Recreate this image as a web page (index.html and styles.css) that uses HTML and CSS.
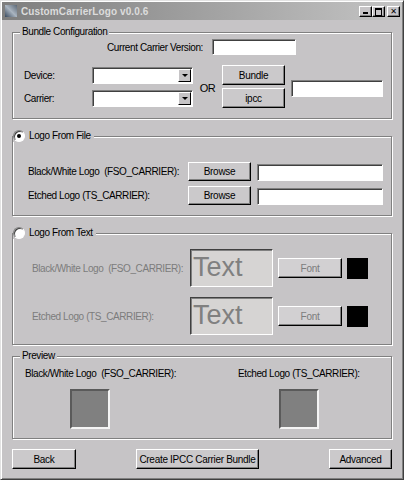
FILE: index.html
```html
<!DOCTYPE html>
<html lang="en">
<head>
    <meta charset="UTF-8">
    <title>CustomCarrierLogo v0.0.6</title>
    <link rel="stylesheet" href="styles.css">
</head>
<body>
<div class="window">
    <div class="titlebar">
        <svg class="app-icon" width="12" height="12" viewBox="0 0 12 12">
            <defs>
                <linearGradient id="ig" x1="0" y1="1" x2="1" y2="0">
                    <stop offset="0" stop-color="#3a4a5e"/>
                    <stop offset="0.5" stop-color="#a9b4c0"/>
                    <stop offset="1" stop-color="#5c6876"/>
                </linearGradient>
            </defs>
            <rect width="12" height="12" fill="url(#ig)"/>
        </svg>
        <span class="title">CustomCarrierLogo v0.0.6</span>
        <div class="caption-buttons">
            <span class="cap-btn cap-min"></span>
            <span class="cap-btn cap-max"></span>
            <span class="cap-btn cap-close">&#x2715;</span>
        </div>
    </div>

    <div class="content">
        <fieldset class="group group-bundle">
            <legend>Bundle Configuration</legend>
            <div class="version-row">
                <span class="version-label">Current Carrier Version:</span>
                <span class="field version-field"></span>
            </div>
            <div class="bundle-grid">
                <span class="lbl lbl-device">Device:</span>
                <span class="combo combo-device"><span class="combo-arrow"></span></span>
                <span class="lbl lbl-carrier">Carrier:</span>
                <span class="combo combo-carrier"><span class="combo-arrow"></span></span>
                <span class="or">OR</span>
                <button class="btn btn-bundle">Bundle</button>
                <button class="btn btn-ipcc">ipcc</button>
                <span class="field bundle-field"></span>
            </div>
        </fieldset>

        <fieldset class="group group-file">
            <legend class="radio-legend"><span class="radio checked"></span>Logo From File</legend>
            <div class="file-row">
                <span class="row-label">Black/White Logo&nbsp; (FSO_CARRIER):</span>
                <button class="btn btn-browse">Browse</button>
                <span class="field file-field"></span>
            </div>
            <div class="file-row">
                <span class="row-label">Etched Logo (TS_CARRIER):</span>
                <button class="btn btn-browse">Browse</button>
                <span class="field file-field"></span>
            </div>
        </fieldset>

        <fieldset class="group group-text">
            <legend class="radio-legend"><span class="radio"></span>Logo From Text</legend>
            <div class="text-row">
                <span class="row-label disabled">Black/White Logo&nbsp; (FSO_CARRIER):</span>
                <span class="text-box">Text</span>
                <button class="btn btn-font" disabled>Font</button>
                <span class="swatch"></span>
            </div>
            <div class="text-row">
                <span class="row-label disabled">Etched Logo (TS_CARRIER):</span>
                <span class="text-box">Text</span>
                <button class="btn btn-font" disabled>Font</button>
                <span class="swatch"></span>
            </div>
        </fieldset>

        <fieldset class="group group-preview">
            <legend>Preview</legend>
            <div class="preview-grid">
                <div class="preview-col">
                    <span>Black/White Logo&nbsp; (FSO_CARRIER):</span>
                    <span class="preview-box preview-bw"></span>
                </div>
                <div class="preview-col">
                    <span>Etched Logo (TS_CARRIER):</span>
                    <span class="preview-box preview-etched"></span>
                </div>
            </div>
        </fieldset>

        <div class="actions">
            <button class="btn btn-back">Back</button>
            <button class="btn btn-create">Create IPCC Carrier Bundle</button>
            <button class="btn btn-advanced">Advanced</button>
        </div>
    </div>
</div>
</body>
</html>
```

FILE: styles.css
```css
html, body {
    margin: 0;
    padding: 0;
}
body {
    background: #c6c4c6;
    font-family: 'Liberation Sans', Arial, sans-serif;
    font-size: 10px;
    letter-spacing: -0.4px;
    white-space: nowrap;
    color: #000;
}
.window {
    width: 404px;
    height: 480px;
    box-sizing: border-box;
    border: 1px solid;
    border-color: #e2e2e2 #404040 #404040 #e2e2e2;
    box-shadow: inset 1px 1px 0 #fff, inset -1px -1px 0 #808080;
    background: #c6c4c6;
}

/* title bar (inactive window) */
.titlebar {
    height: 18px;
    margin: 1px 1px 0;
    display: flex;
    align-items: center;
    background: linear-gradient(90deg, #7e7e7e 0%, #a4a4a4 55%, #c4c4c4 100%);
}
.app-icon {
    margin-left: 3px;
}
.title {
    margin-left: 4px;
    font-weight: bold;
    font-size: 10px;
    color: #dcdcdc;
    letter-spacing: 0.1px;
}
.caption-buttons {
    margin-left: auto;
    margin-right: 2px;
    display: flex;
}
.cap-btn {
    width: 13px;
    height: 11px;
    box-sizing: border-box;
    background: #c6c4c6;
    border: 1px solid;
    border-color: #fff #000 #000 #fff;
    box-shadow: inset -1px -1px 0 #808080;
    position: relative;
    font-family: 'DejaVu Sans', sans-serif;
    font-size: 8px;
    font-weight: bold;
    letter-spacing: 0;
    line-height: 9px;
    text-align: center;
}
.cap-close {
    margin-left: 2px;
}
.cap-min::after {
    content: '';
    position: absolute;
    left: 3px;
    bottom: 2px;
    width: 5px;
    height: 2px;
    background: #000;
}
.cap-max::after {
    content: '';
    position: absolute;
    left: 2px;
    top: 1px;
    width: 5px;
    height: 5px;
    border: 1px solid #000;
    border-top-width: 2px;
}

.content {
    padding: 6px 11px 0 11px;
}

/* etched group boxes */
.group {
    margin: 0;
    padding: 0;
    min-width: 0;
    border: 1px solid #808080;
    box-shadow: inset 1px 1px 0 #fff, 1px 1px 0 #fff;
    box-sizing: border-box;
}
.group legend {
    margin-left: 7px;
    padding: 0 2px;
    line-height: 12px;
    height: 12px;
    background: #c6c4c6;
}
.group .radio-legend {
    margin-left: 0;
    padding: 0 3px 0 0;
    display: flex;
    align-items: center;
}
.radio {
    width: 12px;
    height: 12px;
    box-sizing: border-box;
    border-radius: 50%;
    background: #fff;
    border: 1px solid;
    border-color: #808080 #fff #fff #808080;
    box-shadow: inset 1px 1px 0 #404040;
    margin-right: 4px;
    display: flex;
    align-items: center;
    justify-content: center;
}
.radio.checked::after {
    content: '';
    width: 4px;
    height: 4px;
    border-radius: 50%;
    background: #000;
}
.group-bundle {
    height: 93px;
}
.group-file {
    height: 86px;
    margin-top: 11px;
    padding-top: 20px;
}
.group-text {
    height: 118px;
    margin-top: 11px;
    padding-top: 10px;
}
.group-preview {
    height: 89px;
    margin-top: 5px;
    padding-top: 5px;
}

/* sunken fields and raised buttons */
.field {
    display: block;
    box-sizing: border-box;
    background: #fff;
    border: 1px solid;
    border-color: #808080 #fff #fff #808080;
    box-shadow: inset 1px 1px 0 #404040;
}
.btn {
    font-family: inherit;
    font-size: 10px;
    letter-spacing: -0.3px;
    color: #000;
    padding: 0;
    margin: 0;
    box-sizing: border-box;
    background: #cbc9cb;
    border: 1px solid;
    border-color: #fff #000 #000 #fff;
    box-shadow: inset -1px -1px 0 #808080;
    height: 20px;
    flex-shrink: 0;
}
.btn:disabled {
    color: #7c7c7c;
    background: #d2d0d2;
}

/* bundle configuration */
.version-row {
    display: flex;
    height: 16px;
    margin-top: 1px;
    align-items: center;
}
.version-label {
    width: 190px;
    text-align: right;
}
.version-field {
    margin-left: 9px;
    width: 84px;
    height: 16px;
}
.bundle-grid {
    display: grid;
    grid-template-columns: 68px 101px 29px 63px 98px;
    grid-template-rows: 20px 20px;
    row-gap: 3px;
    margin: 10px 0 0 11px;
    align-items: center;
}
.lbl-device { grid-area: 1 / 1; }
.combo-device { grid-area: 1 / 2; }
.lbl-carrier { grid-area: 2 / 1; }
.combo-carrier { grid-area: 2 / 2; }
.or {
    grid-area: 1 / 3 / 3 / 4;
    text-align: center;
    padding-top: 3px;
    font-size: 11px;
}
.btn-bundle { grid-area: 1 / 4; }
.btn-ipcc { grid-area: 2 / 4; }
.bundle-field {
    grid-area: 1 / 5 / 3 / 6;
    margin: 4px 0 0 6px;
    width: 92px;
    height: 17px;
}
.combo {
    display: flex;
    justify-content: flex-end;
    height: 17px;
    box-sizing: border-box;
    background: #fff;
    border: 1px solid;
    border-color: #808080 #fff #fff #808080;
    box-shadow: inset 1px 1px 0 #404040;
    padding: 1px 1px 1px 0;
}
.combo-arrow {
    width: 13px;
    box-sizing: border-box;
    background: #c6c4c6;
    border: 1px solid;
    border-color: #fff #000 #000 #fff;
    display: flex;
    align-items: center;
    justify-content: center;
}
.combo-arrow::after {
    content: '';
    border-left: 3px solid transparent;
    border-right: 3px solid transparent;
    border-top: 3px solid #000;
}

/* logo from file */
.file-row {
    display: flex;
    align-items: flex-end;
    height: 19px;
    margin-bottom: 5px;
}
.row-label {
    padding-left: 15px;
    width: 175px;
    flex-shrink: 0;
    box-sizing: border-box;
    align-self: center;
}
.btn-browse {
    width: 63px;
    height: 19px;
}
.file-field {
    margin-left: 6px;
    width: 126px;
    height: 17px;
}

/* logo from text */
.text-row {
    display: flex;
    align-items: center;
    height: 38px;
    margin-bottom: 10px;
}
.text-row .row-label {
    padding-left: 19px;
    width: 177px;
}
.disabled {
    color: #7c7c7c;
}
.text-box {
    width: 83px;
    height: 38px;
    box-sizing: border-box;
    background: #d6d4d3;
    border: 1px solid;
    border-color: #404040 #fff #fff #404040;
    box-shadow: inset 1px 1px 0 #808080;
    font-size: 27px;
    letter-spacing: 0;
    line-height: 34px;
    color: #808080;
    padding-left: 2px;
}
.btn-font {
    margin-left: 5px;
    width: 64px;
}
.swatch {
    margin-left: 5px;
    width: 21px;
    height: 21px;
    background: #000;
}

/* preview */
.preview-grid {
    display: grid;
    grid-template-columns: 213px 1fr;
}
.preview-col {
    display: flex;
    flex-direction: column;
    align-items: flex-start;
    padding-left: 12px;
    line-height: 13px;
}
.preview-box {
    width: 40px;
    height: 40px;
    box-sizing: border-box;
    margin-top: 9px;
    background: #808080;
    border: 2px solid;
    border-color: #5a5a5a #f4f4f4 #f4f4f4 #5a5a5a;
}
.preview-bw {
    margin-left: 45px;
}
.preview-etched {
    margin-left: 41px;
}

/* bottom buttons */
.actions {
    display: flex;
    margin-top: 10px;
}
.btn-back {
    width: 64px;
}
.btn-create {
    margin-left: 60px;
    width: 123px;
}
.btn-advanced {
    margin-left: auto;
    width: 63px;
}
```
